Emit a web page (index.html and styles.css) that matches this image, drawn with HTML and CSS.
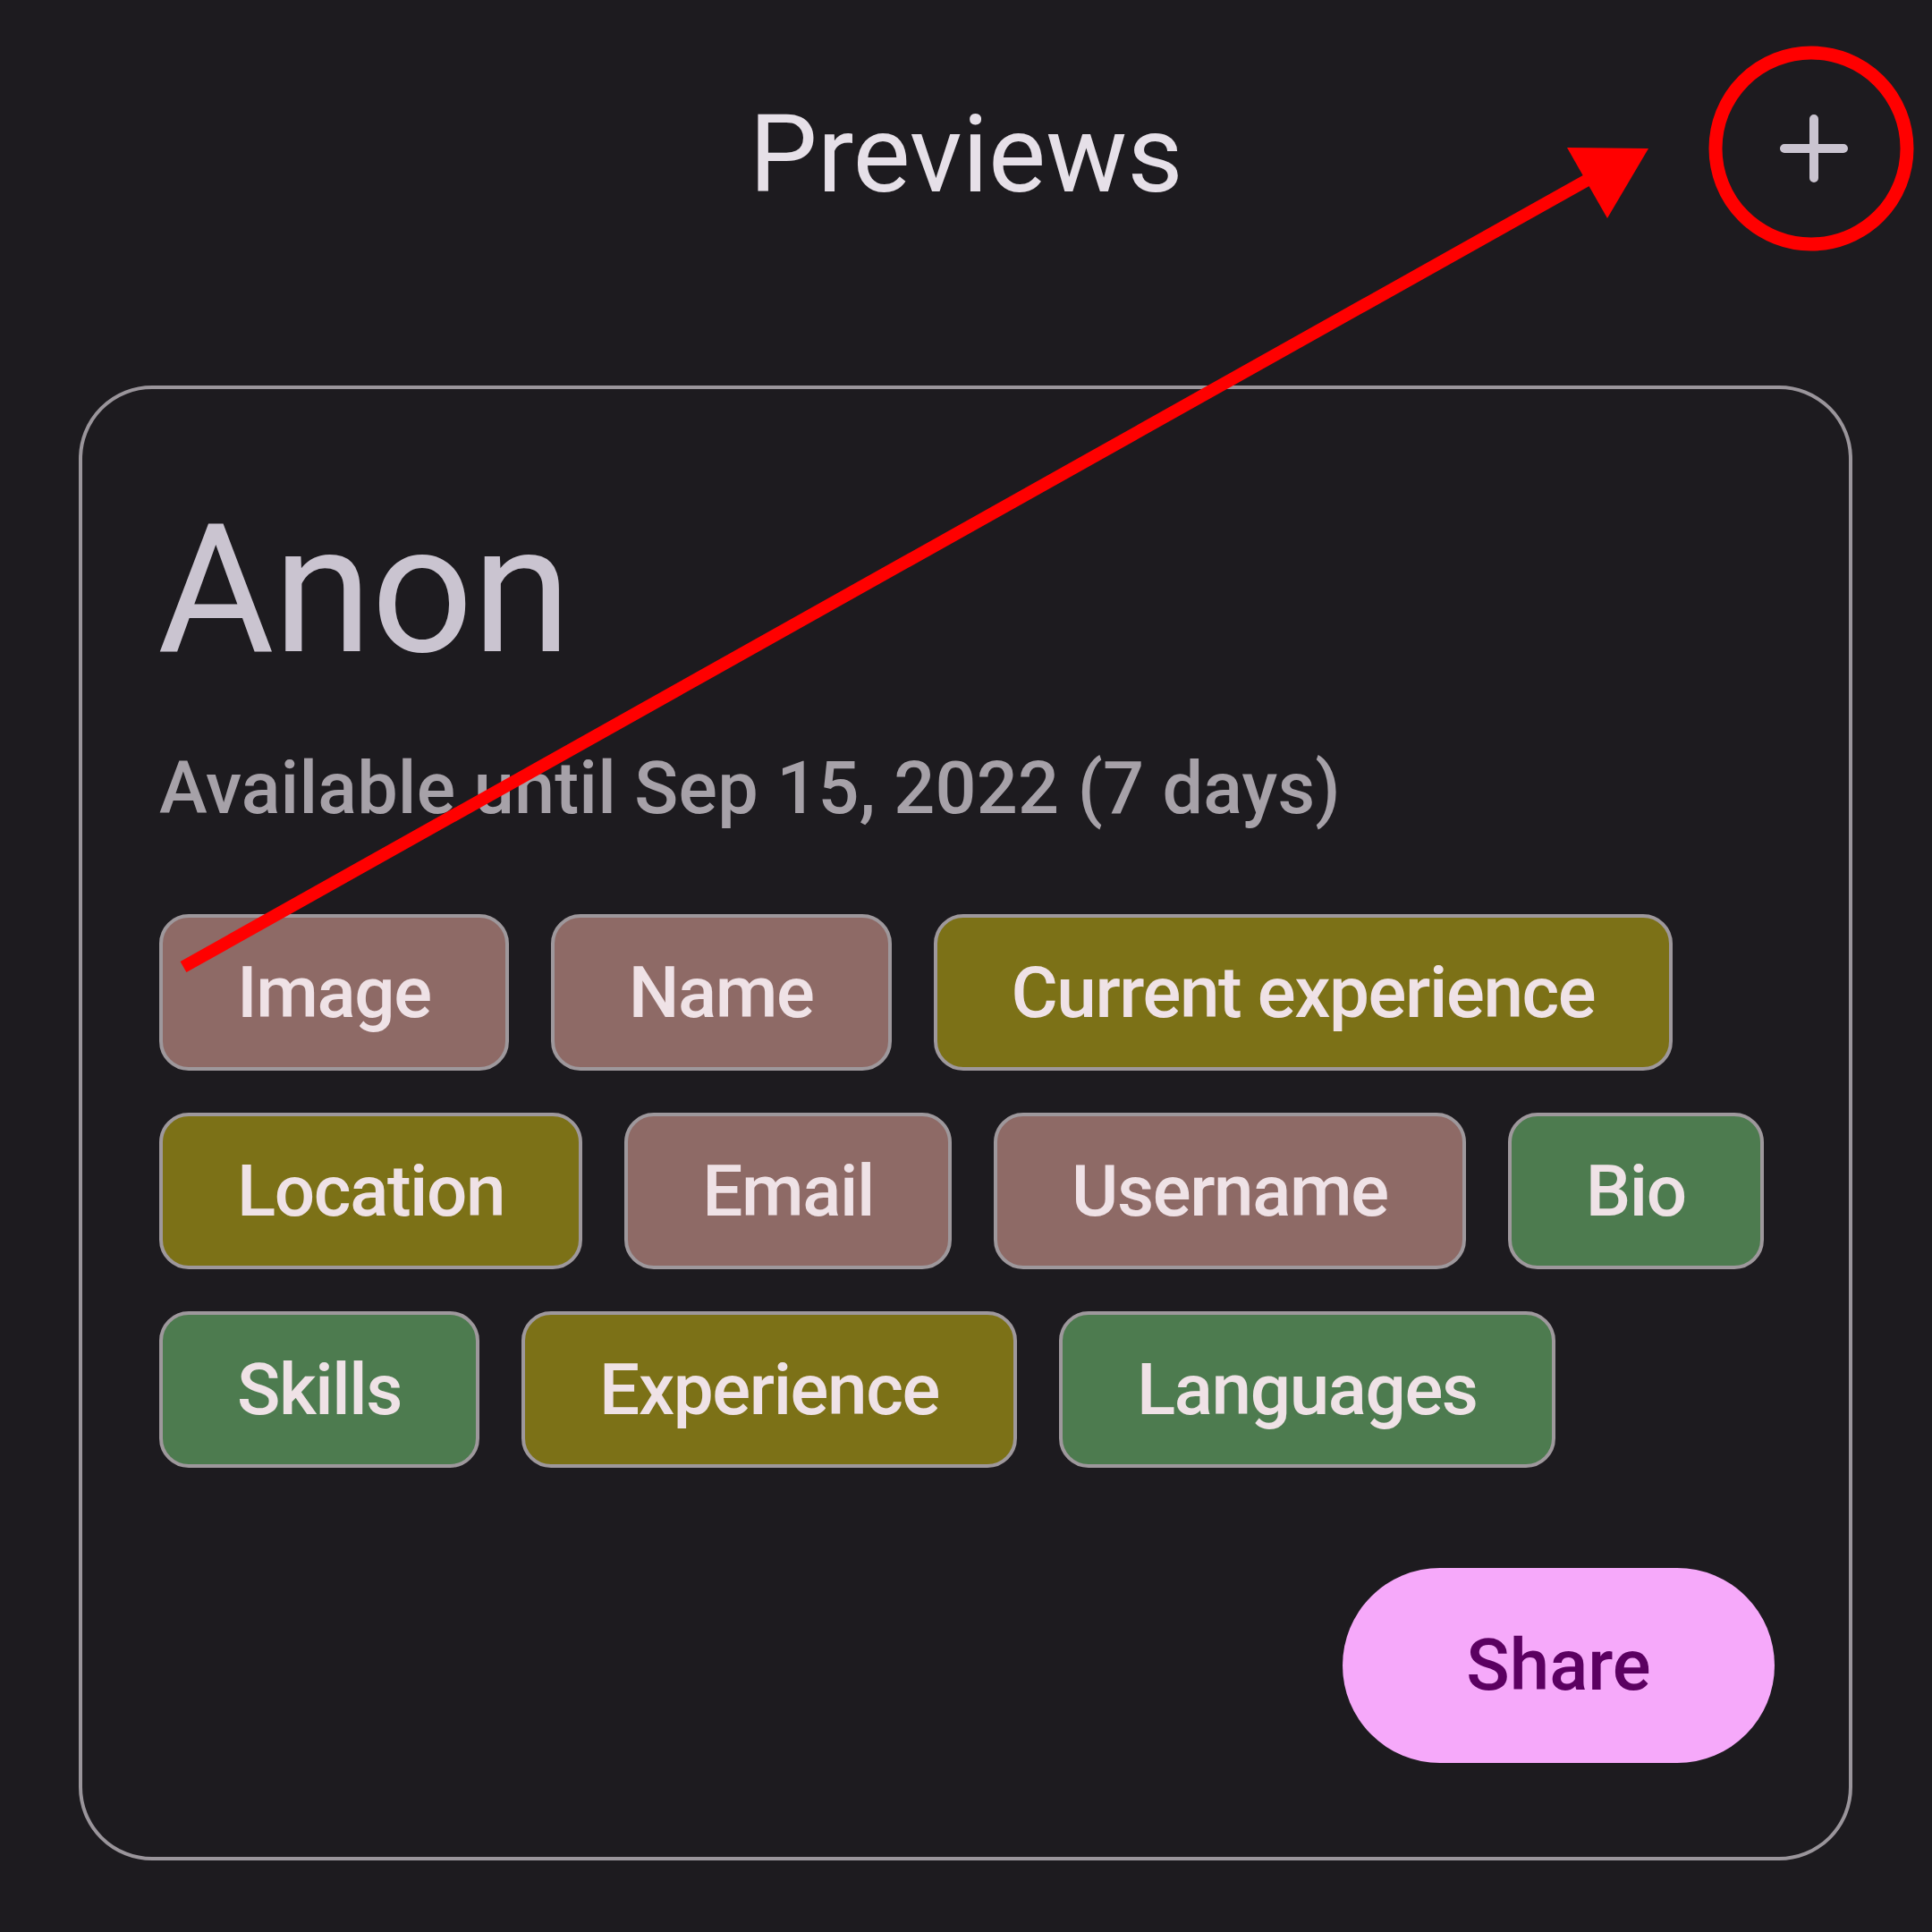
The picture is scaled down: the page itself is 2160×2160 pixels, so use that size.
FILE: index.html
```html
<!DOCTYPE html>
<html lang="en">
<head>
<meta charset="utf-8">
<title>Previews</title>
<link rel="stylesheet" href="styles.css">
</head>
<body>
<div class="screen">
  <header class="top-bar">
    <div class="top-bar__spacer"></div>
    <h1 class="top-bar__title">Previews</h1>
    <button class="icon-btn" aria-label="Add preview">
      <svg class="icon-btn__svg" viewBox="0 0 96 96" aria-hidden="true">
        <path d="M48 15V81M15 48H81"/>
      </svg>
    </button>
  </header>

  <section class="card">
    <h2 class="card__name">Anon</h2>
    <p class="card__meta">Available until Sep 15, 2022 (7 days)</p>
    <div class="chips">
      <div class="chips__row">
        <span class="chip chip--brown">Image</span>
        <span class="chip chip--brown">Name</span>
        <span class="chip chip--olive">Current experience</span>
      </div>
      <div class="chips__row">
        <span class="chip chip--olive">Location</span>
        <span class="chip chip--brown">Email</span>
        <span class="chip chip--brown">Username</span>
        <span class="chip chip--green">Bio</span>
      </div>
      <div class="chips__row">
        <span class="chip chip--green">Skills</span>
        <span class="chip chip--olive">Experience</span>
        <span class="chip chip--green">Languages</span>
      </div>
    </div>
    <div class="card__actions">
      <button class="share-btn">Share</button>
    </div>
  </section>
</div>

<svg class="annotation" viewBox="0 0 2160 2160" aria-hidden="true">
  <circle class="annotation__ring" cx="2025" cy="166" r="107"/>
  <line class="annotation__shaft" x1="205" y1="1081" x2="1800" y2="187"/>
  <polygon class="annotation__head" points="1752,165 1843,166 1797,244"/>
</svg>
</body>
</html>
```

FILE: styles.css
```css
* {
  box-sizing: border-box;
}

html, body {
  margin: 0;
  padding: 0;
}

body {
  width: 2160px;
  height: 2160px;
  background: #1d1b1f;
  font-family: Roboto, "Noto Sans", "Liberation Sans", sans-serif;
  position: relative;
  overflow: hidden;
}

.screen {
  display: flex;
  flex-direction: column;
}

.top-bar {
  height: 332px;
  display: grid;
  grid-template-columns: 1fr auto 1fr;
  align-items: center;
}

.top-bar__title {
  margin: 0;
  padding-top: 14px;
  font-weight: 400;
  font-size: 121px;
  line-height: normal;
  color: #e6e0e8;
}

.icon-btn {
  justify-self: end;
  margin-right: 84px;
  width: 96px;
  height: 96px;
  padding: 0;
  border: 0;
  background: transparent;
  display: flex;
}

.icon-btn__svg {
  width: 96px;
  height: 96px;
  fill: none;
  stroke: #cac4d0;
  stroke-width: 10;
  stroke-linecap: round;
}

.card {
  margin: 99px 89px 0 88px;
  border: 4px solid #9a959b;
  border-radius: 82px;
  padding: 107px 83px 105px 86px;
  display: flex;
  flex-direction: column;
}

.card__name {
  margin: 0 0 0 -2px;
  font-weight: 400;
  font-size: 200px;
  letter-spacing: -1px;
  line-height: normal;
  color: #cac4d0;
}

.card__meta {
  margin: 57px 0 0 0;
  font-weight: 500;
  font-size: 81px;
  letter-spacing: 0.2px;
  line-height: normal;
  color: #a6a1a8;
}

.chips {
  margin-top: 93px;
  display: flex;
  flex-direction: column;
  gap: 47px;
}

.chips__row {
  display: flex;
  gap: 47px;
}

.chip {
  height: 175px;
  padding: 0 83px;
  border: 4px solid #9e989c;
  border-radius: 33px;
  display: inline-flex;
  align-items: center;
  font-weight: 500;
  font-size: 80px;
  letter-spacing: -1.4px;
  color: #efe2e6;
  white-space: nowrap;
}

.chip--brown {
  background: #8e6a66;
}

.chip--olive {
  background: #7c7117;
}

.chip--green {
  background: #4d7b4f;
}

.card__actions {
  margin-top: 112px;
  display: flex;
  justify-content: flex-end;
}

.share-btn {
  width: 483px;
  height: 218px;
  border: 0;
  border-radius: 109px;
  background: #f6a9fa;
  color: #5b0061;
  font-family: Roboto, "Noto Sans", "Liberation Sans", sans-serif;
  font-weight: 500;
  font-size: 80px;
  padding: 0;
}

.annotation {
  position: absolute;
  left: 0;
  top: 0;
  width: 2160px;
  height: 2160px;
  pointer-events: none;
}

.annotation__ring {
  fill: none;
  stroke: #ff0000;
  stroke-width: 15;
}

.annotation__shaft {
  stroke: #ff0000;
  stroke-width: 14;
  stroke-linecap: butt;
}

.annotation__head {
  fill: #ff0000;
}
```
